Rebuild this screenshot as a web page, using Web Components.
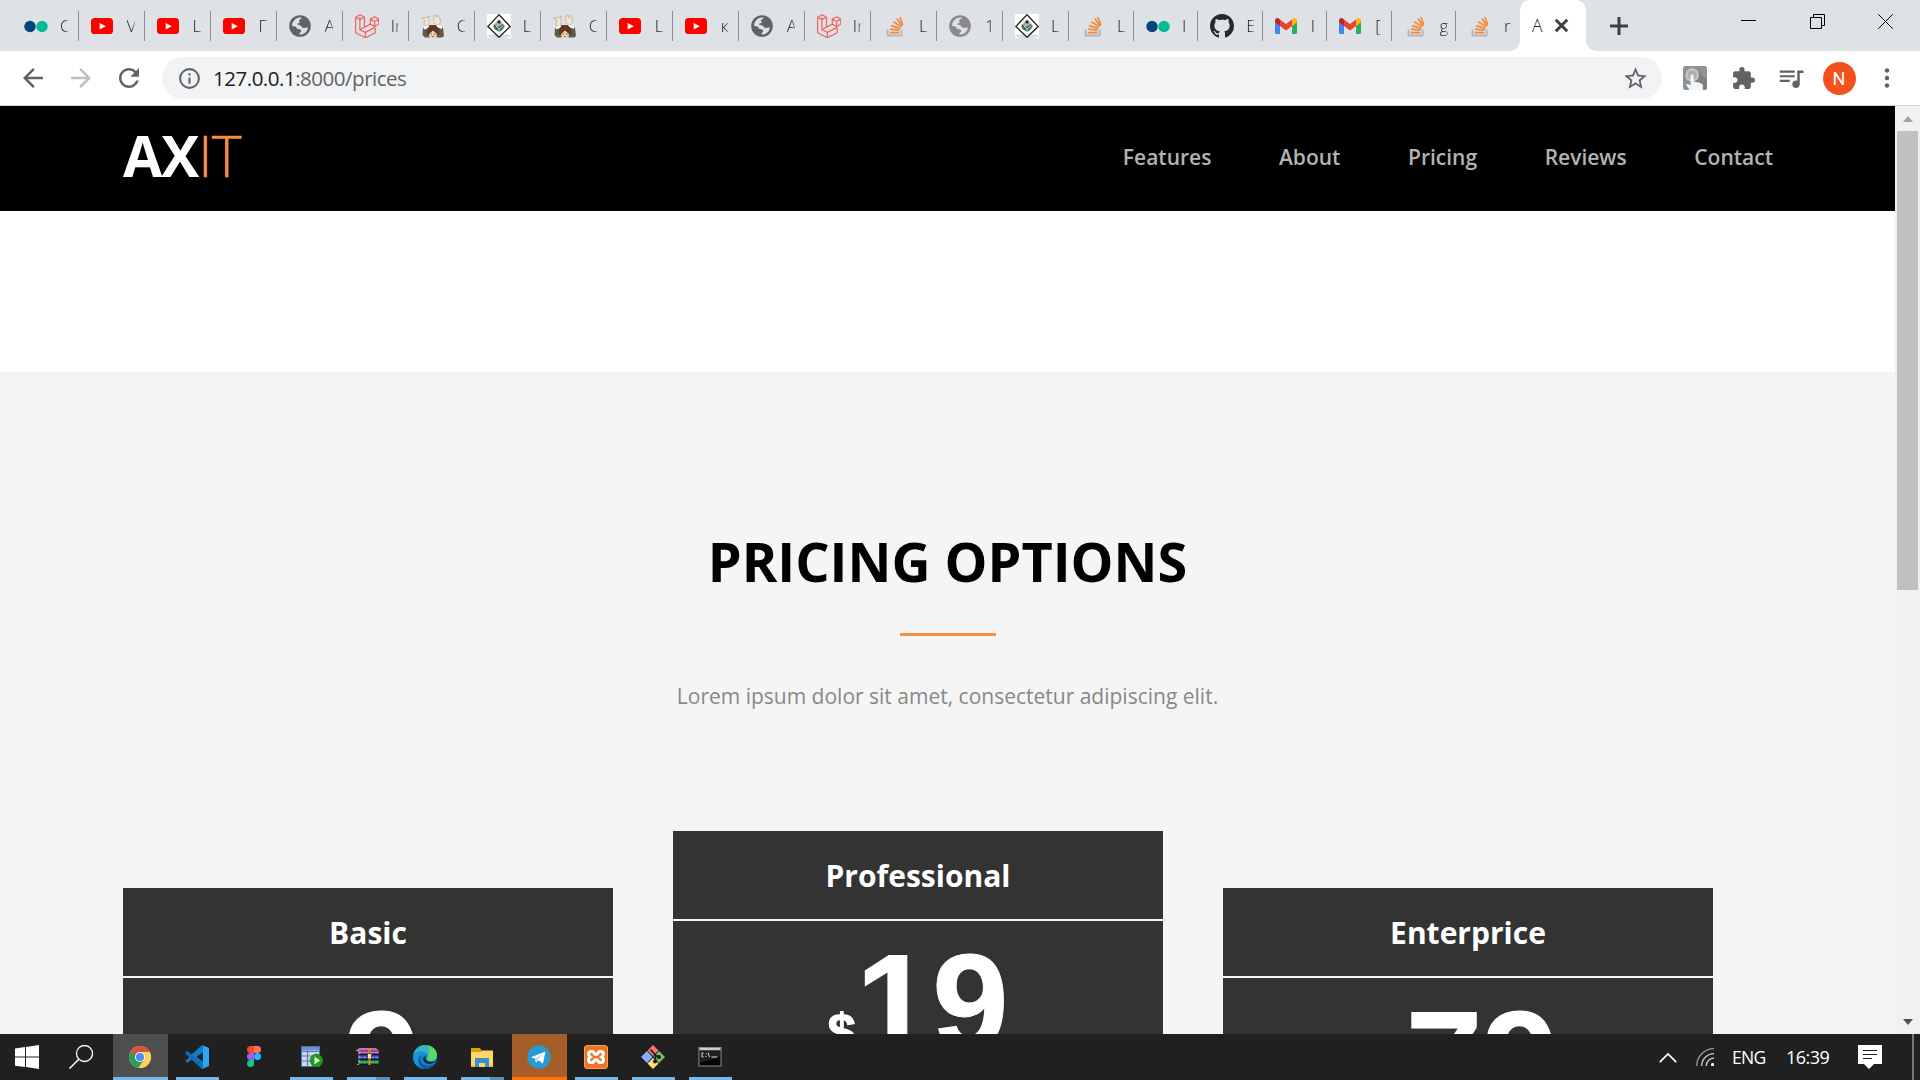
<!DOCTYPE html>
<html lang="en">
<head>
<meta charset="utf-8">
<title>Axit</title>
<style>
html,body{margin:0;padding:0;width:1920px;height:1080px;overflow:hidden;background:#fff}
</style>
</head>
<body>
<desktop-screen></desktop-screen>
<script>
const s=(vb,b,a='')=>`<svg viewBox="${vb}" ${a} xmlns="http://www.w3.org/2000/svg">${b}</svg>`;
const ICONS={
flickr:s('0 0 24 24','<circle cx="6" cy="12.5" r="5.7" fill="#04457f"/><circle cx="18" cy="12.5" r="5.7" fill="#05bb94"/>'),
yt:s('0 0 24 24','<rect x="0" y="4" width="22" height="16" rx="3.6" fill="#f00"/><path d="M8.7 9l6 3.3-6 3.3z" fill="#fff"/>'),
globe:s('0 0 24 24','<circle cx="11" cy="12" r="10.8" fill="var(--c,#5f6368)"/><path d="M3 11.800C3.200 7.500 6.500 3.800 11 3.500c1.200 0 2 .4 1.500 1-.9.900-2.600.9-2.600 2 0 1 1.100 1.100.8 2-.4 1-2.200.5-2.600 1.600-.2 1 2.300.7 3.400 1.300 1.200.7.9 2 2.400 2.400 1.900.4 3.900-.6 5-.2-.2 3.200-2.600 5.800-5.500 6.700-1.300.4-3.200.4-3-.6.4-1.500 2-1.400 1.800-2.900-.2-1.600-2.300-.9-3.600-1.700-1.500-.900-.8-2.500-2.400-2.700-1-.1-2.200-.3-3.200-.6z" fill="#dee1e6"/>'),
laravel:s('0 0 24 24','<path d="M.6 3.200v15.600l9.800 5 9.800-5v-5M.6 3.200l4.600-2.400 4.300 2.400v9.900l-4.600 2.600V3.200M.6 3.200l4.300 2.300 4.600-2.300M10.400 23.800v-5.400l9.600-5M4.900 15.700l5.500 2.700M9.500 13.100l5.800-3V5l4.300-2.200L23.800 5v5.200l-4.100 2.300-4.400-2.400M15.300 5l4.400 2.500L23.800 5M19.700 7.500v5" fill="none" stroke="#f2625c" stroke-width="1.200" stroke-linejoin="round"/>'),
man:s('0 0 24 24','<path d="M2 14l5-3h11l4 3 1 8-2 1.500H4L1.500 21z" fill="#5f5a4c"/><path d="M.5 4l4.500-.5 4-1.500-2 3 1.500 2.500-1.500 4-4 .5.500-6zM13 1.500l1.500-.7 1.200 3 .8-3 2 2.700 1.200 4.500-2.700 3.500-3.500-2-1.200-5z" fill="#f3e6d2" stroke="#b39d7a" stroke-width=".6"/><path d="M2.500 12.500l5-1.500 1 2.500-5.500 2zM15 10.500l6 1.500v3l-5-2z" fill="#fff"/><path d="M6 20.500c-.5-6 2-9.500 6-9.500s6.800 3.500 6.300 9.500l-2.300.5-4-4-4 4z" fill="#66351f"/><path d="M8 20l4-3.500 4 3.500-.5 4h-7z" fill="#ecd2b2"/><path d="M9.300 20.300l1.700-.5M13 19.800l1.700.5M11 22.500h2" stroke="#754b35" stroke-width=".8"/>'),
diamond:s('0 0 24 24','<rect width="24" height="24" fill="#fff"/><ellipse cx="12" cy="22" rx="12" ry="2" fill="#ddd"/><path d="M12 .8L23.200 12.500 12 23.300.8 12.500z" fill="#fff" stroke="#222" stroke-width="1.300"/><path d="M12 5l6.500 7.500-6.500 6-6.500-6z" fill="#a9b5ad"/><circle cx="12" cy="8" r="1.600" fill="#222"/><path d="M6.500 10l4.500 3 5-3 1 3.500-4.500 4.500-5-3z" fill="#356b4b"/><path d="M9 12l3 3 4-3M12 15v3" stroke="#cfe0d6" fill="none"/>'),
so:s('0 0 24 24','<path d="M4.600 15.500v6h14v-6" fill="none" stroke="#b4b6b8" stroke-width="1.900"/><path d="M7 18.600h9.500M7.300 15.200l9.400 1M8.300 11.600l9 2.800M10.600 7.700l7.900 5.200M14 4.500l5.400 7.400M17 3l3 8" transform="translate(-.2 0)" stroke="#f48833" stroke-width="1.700"/>'),
github:s('0 0 16 16','<path fill="#24292e" d="M8 0C3.580 0 0 3.580 0 8c0 3.540 2.290 6.530 5.470 7.590.4.070.55-.17.55-.38 0-.19-.010-.82-.010-1.490-2.010.37-2.530-.49-2.690-.94-.090-.23-.48-.94-.82-1.130-.28-.15-.68-.52-.010-.53.63-.010 1.080.58 1.230.82.72 1.210 1.870.87 2.330.66.070-.52.28-.87.51-1.070-1.780-.2-3.640-.89-3.640-3.950 0-.87.31-1.590.82-2.150-.080-.2-.36-1.020.080-2.120 0 0 .67-.21 2.200.82.64-.18 1.320-.27 2-.27s1.360.09 2 .27c1.530-1.040 2.200-.82 2.200-.82.44 1.100.16 1.920.08 2.120.51.56.82 1.270.82 2.150 0 3.070-1.870 3.750-3.650 3.950.29.25.54.73.54 1.480 0 1.070-.010 1.930-.010 2.200 0 .21.15.46.55.38A8.010 8.010 0 0 0 16 8c0-4.420-3.580-8-8-8z"/>'),
gmail:s('0 0 24 24','<path d="M0 6v12.500Q0 20 1.500 20H5V9z" fill="#4285f4"/><path d="M17 9v11h3.500q1.500 0 1.500-1.500V6z" fill="#34a853"/><path d="M17 5.500V12l5-3.700V6.500c0-2.400-2.400-3-3.600-2.100z" fill="#fbbc04"/><path d="M5 12V5.500l6 4.600 6-4.600V12l-6 4.600z" fill="#ea4335"/><path d="M0 6.500v1.800L5 12V5.500L3.600 4.400C2 3.400 0 4.300 0 6.500z" fill="#c5221f"/>'),
back:s('0 0 24 24','<path fill="#5f6368" d="M20 11H7.830l5.590-5.590L12 4l-8 8 8 8 1.410-1.410L7.830 13H20z"/>'),
fwd:s('0 0 24 24','<path fill="#bdbfc1" d="M4 11h12.170l-5.590-5.590L12 4l8 8-8 8-1.410-1.410L16.170 13H4z"/>'),
reload:s('0 0 24 24','<path fill="#5f6368" d="M17.650 6.350C16.200 4.900 14.210 4 12 4c-4.420 0-7.990 3.580-7.990 8s3.570 8 7.990 8c3.730 0 6.840-2.550 7.730-6h-2.080c-.82 2.330-3.040 4-5.650 4-3.310 0-6-2.690-6-6s2.690-6 6-6c1.660 0 3.140.69 4.220 1.780L13 11h7V4z"/>'),
info:s('0 0 24 24','<circle cx="12" cy="12" r="9" fill="none" stroke="#5f6368" stroke-width="2"/><path d="M11 7h2v2h-2zM11 11h2v6h-2z" fill="#5f6368"/>'),
star:s('0 0 24 24','<path fill="#5f6368" d="M22 9.240l-7.190-.62L12 2 9.190 8.630 2 9.240l5.460 4.730L5.820 21 12 17.270 18.180 21l-1.630-7.030zM12 15.400l-3.760 2.270 1-4.280-3.320-2.880 4.380-.38L12 6.100l1.710 4.040 4.380.38-3.320 2.880 1 4.280z"/>'),
touch:s('0 0 24 24','<rect width="24" height="24" rx="2.500" fill="#919191"/><path d="M14 4l10 10v8l-2 2H12z" fill="#7f7f7f"/><circle cx="9.200" cy="9" r="6.800" fill="#c6c6c6"/><circle cx="9.200" cy="9" r="4.600" fill="#adadad"/><path d="M7.600 9.500q1.400-3 3 0v6l6 1.300 3.200 1.600V24H6.500L3 18.400q1.600-1.200 4.600 1z" fill="#eef6fe"/>'),
puzzle:s('0 0 24 24','<path fill="#5f6368" d="M20.500 11H19V7c0-1.100-.9-2-2-2h-4V3.500a2.500 2.500 0 0 0-5 0V5H4c-1.100 0-1.990.9-1.990 2v3.800H3.500c1.490 0 2.700 1.210 2.700 2.700s-1.210 2.700-2.700 2.700H2V20c0 1.100.9 2 2 2h3.800v-1.500c0-1.490 1.210-2.700 2.700-2.700s2.700 1.210 2.700 2.700V22H17c1.100 0 2-.9 2-2v-4h1.500a2.500 2.500 0 0 0 0-5z"/>'),
music:s('0 0 24 24','<path fill="#5f6368" d="M15 6H3v1.700h12zM15 9.700H3v1.700h12zM3 15.100h8v-1.700H3zM17 6v8.180c-.31-.11-.65-.18-1-.18-1.660 0-3 1.340-3 3s1.340 3 3 3 3-1.340 3-3V8h3V6z"/>'),
dots:s('0 0 24 24','<g fill="#5f6368"><circle cx="12" cy="4.500" r="2.200"/><circle cx="12" cy="12" r="2.200"/><circle cx="12" cy="19.500" r="2.200"/></g>'),
plus:s('0 0 24 24','<path d="M12 3v18M3 12h18" stroke="#3c4043" stroke-width="3"/>'),
x:s('0 0 24 24','<path d="M6.500 6.500l11 11M17.500 6.500l-11 11" stroke="#3c4043" stroke-width="2.900"/>'),
min:s('0 0 15 15','<path d="M0 6.500h15" stroke="#000"/>'),
restore:s('0 0 15 15','<path d="M.5 3.500h11v11H.5zM3.500 3.500v-3h11v11h-3" fill="none" stroke="#000"/>'),
close:s('0 0 15 15','<path d="M.3.3l14.400 14.400M14.700.3L.3 14.700" stroke="#000"/>'),
win:s('0 0 24 24','<path fill="#fff" d="M0 3.500l10-1.400v9.400H0zM11 2l13-2v11.500H11zM0 12.500h10v9.600L0 20.700zM11 12.500h13V24l-13-1.900z"/>'),
search:s('0 0 24 24','<circle cx="15.500" cy="8.500" r="8" fill="none" stroke="#fff" stroke-width="1.300"/><path d="M9.800 14.200L.4 23.600" stroke="#fff" stroke-width="1.500"/>'),
chrome:s('0 0 24 24','<circle cx="12" cy="12" r="11" fill="#fdd25a"/><path d="M2.470 6.500A11 11 0 0 0 10.500 22.900L16.300 14.500 12 12z" fill="#279f5c"/><path d="M12 7h9.800a11 11 0 0 1-11.300 15.900l5.800-8.400z" fill="#fdd25a"/><path d="M2.470 6.500A11 11 0 0 1 21.800 7H12a5 5 0 0 0-4.700 3.600z" fill="#d9513f"/><circle cx="12" cy="12" r="5.100" fill="#f2f2f2"/><circle cx="12" cy="12" r="4" fill="#4b8bf4"/>'),
vscode:s('0 0 24 24','<path d="M17 0L6.700 9.600 2.500 6.300.3 7.600 4.600 12 .3 16.300l2.200 1.400 4.200-3.300L17 24l1.500-6.500L11.600 12l6.900-5.500z" fill="#0b7fc9"/><path d="M0 8.200L2 6.500 17.600 18v5.800z" fill="#0a6fb6"/><path d="M17 0l7 3v18l-7 3 .9-1.700V2z" fill="#2da6f2"/>'),
figma:s('0 0 24 24','<path d="M12 1H8.500a3.500 3.500 0 0 0 0 7H12z" fill="#f24e1e"/><path d="M12 1h3.500a3.500 3.500 0 0 1 0 7H12z" fill="#ff7262"/><path d="M12 8H8.500a3.500 3.500 0 0 0 0 7H12z" fill="#a259ff"/><circle cx="15.500" cy="11.500" r="3.500" fill="#1abcfe"/><path d="M12 15H8.500a3.500 3.500 0 1 0 3.500 3.500z" fill="#0acf83"/>'),
db:s('0 0 24 24','<rect x="2.500" y="1.500" width="18" height="20" fill="#c9daf0" stroke="#4a70a8"/><path d="M3 6.500h17M3 11h17M3 16h17M8.500 2v19" stroke="#5379b2" stroke-width="1.200"/><path d="M3 2h17v3.500H3z" fill="#6d92c9"/><circle cx="17.500" cy="15.500" r="6.400" fill="#1aa011" stroke="#0d7308" stroke-width=".6"/><path d="M15.500 11.800l5.500 3.700-5.500 3.700z" fill="#fff"/>'),
rar:s('0 0 24 24','<path d="M3 3h17l3 3H0z" fill="#b27aa5"/><path d="M2 5h21v4.500H2z" fill="#a43e8f"/><path d="M2 10h21v4.500H2z" fill="#2749d6"/><path d="M2 15h21v4.500H2z" fill="#16952c"/><path d="M2 9.500h21M2 14.500h21M2 19.500h21" stroke="#14142b" stroke-width="1.600"/><path d="M0 5.500h3v14H0M3 7.500h19M3 12.300h19M3 17.200h19" stroke="#e8dfe2" stroke-width=".6" fill="none" stroke-dasharray="3 1"/><path d="M12.300 3h2.400v17h-2.400z" fill="#c98b30"/><rect x="11.500" y="8.500" width="4" height="5.500" rx="1" fill="#f5e7ae" stroke="#40300e" stroke-width=".8"/>'),
edge:s('0 0 24 24','<circle cx="12" cy="12" r="12" fill="#1384d3"/><path d="M.3 10C1.500 4 6.300 0 12 0c6.800 0 12 4.600 12 10 0 3.800-2.800 6-6 6-2.600 0-4.200-1-4.200-1.800 0-.7 1-1 1-2.700C14.800 9 12.600 7 9.700 7 5 7 1 8.600.3 10z" fill="#2fb5c4"/><path d="M14 .3C20 1.300 24 5.500 24 10c0 3.800-2.800 6-6 6-2.600 0-4.200-1-4.200-1.800 0-.7 1-1 1-2.700C17 7 17 3 14 .3z" fill="#5bd668"/><path d="M9 10c-4 4-2 11 4 13-7 1-13-4-13-11 0-3 3-5.500 7-5.500 4.500 0 7.500 2 7.800 4.800C14 9.500 11 8.500 9 10z" fill="#1e8fd6"/><path d="M8.700 10.300C5.500 14 8 20 13.500 20.600c3.500.3 6-1 8.400-2.100C20 22 16 24 12 24c-5-1.500-7.500-6-6.500-10 .5-2 1.700-3.200 3.200-3.700z" fill="#0c59a4"/><path d="M12.500 11c-1 2.500 1 5.500 4.700 6 2 .2 4-.3 5.500-1.200-.6 1.800-4 3.700-7.500 3-5-.9-7-6-2.700-7.800z" fill="#202020"/>'),
folder:s('0 0 24 24','<path d="M1 3h9l1.500 2.500V8H1z" fill="#dd9f09"/><path d="M1 7h10l1-1.500h11V22H1z" fill="#ffd566"/><path d="M5 22v-9h14v9h-4v-4H9v4z" fill="#3a90d2"/><path d="M1 20h4v2H1zM19 20h4v2h-4z" fill="#f5bf42"/>'),
tg:s('0 0 24 24','<circle cx="12" cy="12" r="11.700" fill="#2799d5"/><path d="M4 12.300L18.500 6.500 16 18.500l-4.700-3.300-2.300 2.500-.8-4z" fill="#fff"/><path d="M8.200 13.700L16 8.500l-5.500 6.200L9 17.700z" fill="#b9d6ea"/>'),
xampp:s('0 0 24 24','<rect x=".5" y=".5" width="23" height="23" rx="2.500" fill="#ec7424" stroke="#ffa057"/><path d="M7 6.500h1.500c1.500 0 1.500 3 3.500 3s2-3 3.500-3H17c3 0 3 4 .8 5.500 2.200 1.500 2.200 5.500-.8 5.500h-1.500c-1.500 0-1.500-3-3.500-3s-2 3-3.500 3H7c-3 0-3-4-.8-5.500C4 10.500 4 6.500 7 6.500z" fill="none" stroke="#fff" stroke-width="3.200"/>'),
git:s('0 0 24 24','<path d="M12 0l5.500 5.500-5.500 5.500-5.500-5.500z" fill="#f57373"/><path d="M6 6l5.500 6L6 18 0 12z" fill="#83b0ff"/><path d="M18 6l6 6-6 6-5.500-6z" fill="#7ac35e"/><path d="M12 13l5.500 5.500L12 24l-5.500-5.500z" fill="#ffe07a"/><path d="M9.500 4.500l5 5.500v8M14 10l4 2" stroke="#1b1b1b" stroke-width="1.600" fill="none"/><circle cx="14" cy="16.500" r="2" fill="#1b1b1b"/><circle cx="18" cy="12" r="2" fill="#1b1b1b"/>'),
cmd:s('0 0 24 24','<rect x="1" y="2.500" width="22" height="18.500" fill="#050505" stroke="#8b8f93"/><path d="M1.500 3h21v2.300h-21z" fill="#c5cfda"/><path d="M5.500 8H4v4h1.500M8 8.500v1M8 11v1M10 7.500l1.500 4.500M13.500 12h6" stroke="#e0e0e0" fill="none"/><path d="M2 5.500h20v6L2 18z" fill="#fff" opacity=".1"/>'),
up:s('0 0 18 11','<path d="M.8 10.200L9 2l8.200 8.200" fill="none" stroke="#fff" stroke-width="1.700"/>'),
wifi:s('0 0 18 18','<path d="M.7 18A17.300 17.300 0 0 1 18 .7" fill="none" stroke="#9b9b9b" stroke-width="1.300"/><path d="M5.700 18A12.300 12.300 0 0 1 18 5.700M10.200 18A7.800 7.800 0 0 1 18 10.200" fill="none" stroke="#d0d0d0" stroke-width="1.300"/><circle cx="16.500" cy="16.500" r="1.600" fill="#fff"/>'),
note:s('0 0 24 24','<path d="M0 0h24v19h-8l-5 5-5-5H0z" fill="#fff"/><path d="M5 5.500h14M5 9.500h14M5 13.500h9" stroke="#1f1f1f" stroke-width="1.200"/>')
};

function define(name,css,html){
  customElements.define(name,class extends HTMLElement{
    connectedCallback(){
      if(this.shadowRoot)return;
      const t=document.createElement('template');
      t.innerHTML=`<style>${css}</style>${typeof html==='function'?html(this):html}`;
      this.attachShadow({mode:'open'}).append(t.content.cloneNode(true));
    }
  });
}
const ic=(n,size,extra='')=>`<ui-icon name="${n}" style="--s:${size}px;${extra}"></ui-icon>`;

define('ui-icon',`:host{display:block;flex:none;width:var(--s,24px);height:var(--s,24px)}svg{display:block;width:100%;height:100%}`,e=>ICONS[e.getAttribute('name')]);

define('browser-tab',`
:host{display:flex;flex:none;box-sizing:border-box;height:30px;align-items:center;padding-left:12px;border-right:1.5px solid #8b8e93;font:18px "Open Sans",sans-serif;color:#202124}
:host([last]){border-color:transparent}
span{margin-left:12px;width:8px;overflow:hidden;white-space:nowrap;font-size:17px;font-weight:300;line-height:24px;-webkit-mask:linear-gradient(90deg,#000 55%,#0006);margin-top:-1px}
`,e=>`${ic(e.getAttribute('icon'),24,e.hasAttribute('soft')?'--c:#8a8a8a':'')}<span><slot></slot></span>`);

define('active-tab',`
:host{display:flex;flex:none;position:relative;box-sizing:border-box;width:66px;height:51px;align-items:center;background:#fff;border-radius:10px 10px 0 0;padding:0 0 1px 12px;font:300 17.500px "Open Sans",sans-serif;color:#202124}
:host::before,:host::after{content:"";position:absolute;bottom:0;width:10px;height:10px}
:host::before{left:-10px;background:radial-gradient(circle at 0 0,transparent 9.500px,#fff 10px)}
:host::after{right:-10px;background:radial-gradient(circle at 100% 0,transparent 9.500px,#fff 10px)}
span{width:11px;margin-right:6px}
`,`<span><slot></slot></span>${ic('x',25)}`);

const TABS=[['flickr','C',66.5],['yt','V'],['yt','L'],['yt','Г'],['globe','A'],['laravel','In'],['man','C'],['diamond','L'],['man','C'],['yt','L'],['yt','к'],['globe','A'],['laravel','In'],['so','L'],['globe','1'],['diamond','L'],['so','L',65],['flickr','I',64.4],['github','E',64.4],['gmail','I',64.4],['gmail','[',64.4],['so','g',64.4],['so','r',64]];
define('tab-strip',`
:host{display:flex;height:51px;background:#dee1e6;padding-left:12px;box-sizing:border-box}
.tabs{display:flex;align-items:center;width:1508px;flex:none}
.tabs browser-tab{margin-top:1px}
.plus{display:flex;align-items:center;width:65px;justify-content:center}
.win{display:flex;margin-left:auto;height:43px;align-items:center;width:206px}
.win div{display:flex;justify-content:center;flex:1}
`,`<div class="tabs">${TABS.map((t,i)=>`<browser-tab icon="${t[0]}" ${i==22?'last':''} ${i==14?'soft':''} style="width:${t[2]||66.04}px">${t[1]}</browser-tab>`).join('')}</div>
<active-tab>A</active-tab><div class="plus">${ic('plus',24)}</div>
<div class="win"><div>${ic('min',15)}</div><div>${ic('restore',15)}</div><div>${ic('close',15)}</div></div>`);

define('address-bar',`
:host{display:flex;align-items:center;box-sizing:border-box;width:1500px;height:42px;border-radius:21px;background:#f1f3f4;padding:0 13px 0 15px;font:20.5px "Open Sans",sans-serif;color:#5f6368;white-space:nowrap}
p{margin:0 0 0 11px;flex:1;line-height:42px;letter-spacing:-.48px}b{font-weight:400;color:#202124}
`,`${ic('info',25)}<p><b>127.0.0.1</b>:8000/prices</p>${ic('star',27)}`);

define('browser-toolbar',`
:host{display:flex;align-items:center;height:54px;background:#fff;padding-left:9px;box-sizing:border-box;border-bottom:0}
i{display:flex;width:48px;justify-content:center;font-style:normal}
address-bar{margin:0 9px}
.av{width:33px;height:33px;border-radius:50%;background:#f4511e;color:#fff;font:18px/33px Roboto,sans-serif;text-align:center}
`,`<i>${ic('back',30)}</i><i>${ic('fwd',30)}</i><i>${ic('reload',30)}</i><address-bar></address-bar><i>${ic('touch',24)}</i><i>${ic('puzzle',25)}</i><i>${ic('music',30)}</i><i><span class="av">N</span></i><i>${ic('dots',24)}</i>`);

define('site-header',`
:host{display:flex;justify-content:space-between;align-items:center;height:105px;background:#000;box-sizing:border-box;padding:0 122px 0 123px;font-family:"Open Sans",sans-serif}
.logo{font-size:57px;line-height:60px;font-weight:700;color:#fff;letter-spacing:-1px;display:flex;margin-top:-8px}
.logo span{font-weight:300;color:#f78d3f;-webkit-text-stroke:.5px #f78d3f}
nav{display:flex;gap:67.600px;font-size:21px;font-weight:600;color:#b3b3b3;line-height:30px;margin-top:-3px}
`,`<div class="logo">AX<span>IT</span></div><nav><span>Features</span><span>About</span><span>Pricing</span><span>Reviews</span><span>Contact</span></nav>`);

define('price-card',`
:host{display:block;width:490px;height:420px;background:#333;color:#fff;text-align:center}
h3{margin:0;height:88px;border-bottom:2px solid #f5f5f5;font:700 30px/90px "Open Sans",sans-serif}
.p{font:700 137px/166px "Liberation Sans",Arial,sans-serif;margin-top:-1px;white-space:nowrap;-webkit-text-stroke:1px #fff}
small{font-size:51px}
`,e=>`<h3>${e.getAttribute('plan')}</h3><div class="p"><small>$</small><slot></slot></div>`);

define('pricing-section',`
:host{display:flex;flex-direction:column;align-items:center;height:662px;overflow:hidden;background:#f5f5f5;margin-top:161px;font-family:"Open Sans",sans-serif}
h2{margin:152px 0 0;font-size:54px;line-height:74px;font-weight:700;color:#000}
hr{flex:none;border:0;margin:35px 0 0;width:96px;height:3px;background:#f78d3f}
p{margin:45px 0 0;font-size:21px;line-height:30px;color:#888}
.cards{display:flex;gap:60px;align-self:flex-start;margin:120px 0 0 123px;align-items:flex-start}
.side{margin-top:57px}
`,`<h2>PRICING OPTIONS</h2><hr><p>Lorem ipsum dolor sit amet, consectetur adipiscing elit.</p>
<div class="cards"><price-card class="side" plan="Basic">9</price-card><price-card plan="Professional">19</price-card><price-card class="side" plan="Enterprice">79</price-card></div>`);

define('scroll-bar',`
:host{display:flex;flex-direction:column;align-items:center;width:25px;background:#f1f1f1;height:928px}
i{border:5.500px solid transparent;width:0;height:0}
.u{border-width:0 5.500px 6px;border-bottom-color:#a3a3a3;margin:10px 0 9px}
.t{width:21px;height:459px;background:#c1c1c1}
.d{border-width:6px 5.500px 0;border-top-color:#505050;margin:auto 0 9px}
`,`<i class="u"></i><div class="t"></div><i class="d"></i>`);

define('task-button',`
:host{display:flex;flex-direction:column;width:57px;height:46px;align-items:center;padding:0 1px;box-sizing:border-box}
.b{width:100%;height:43px;display:flex;align-items:center;justify-content:center;padding:3px 1px 0 0;box-sizing:border-box;background:var(--bg,none)}
.l{width:43px;height:3px;background:var(--line,#76b9ed)}
:host([full]) .l{width:100%}
:host([none]) .l{background:none}
:host([multi]) .l{background:linear-gradient(90deg,#76b9ed 29px,#5b8fb8 29px)}
`,e=>`<div class="b">${ic(e.getAttribute('icon'),24)}</div><div class="l"></div>`);

define('task-bar',`
:host{display:flex;height:46px;background:#202020;color:#fff;font:18px "Open Sans",sans-serif}
.sys{display:flex;width:112px;align-items:center;gap:30px;padding-left:15px;box-sizing:border-box}
.tray{display:flex;margin-left:auto;align-items:center;width:261px}
.tray span{line-height:46px;white-space:nowrap}
.e{width:33px;margin-left:18px;letter-spacing:-.7px;font-size:17.500px}
.c{width:43px;margin-left:21px;font-size:18px;letter-spacing:-.55px}
ui-icon.up{height:11px}
.end{width:2px;height:46px;background:#777;margin-left:30px}
`,`<div class="sys">${ic('win',24)}${ic('search',24)}</div>
<task-button icon="chrome" full style="--bg:#4e4e4e"></task-button><task-button icon="vscode"></task-button><task-button icon="figma" none></task-button><task-button icon="db"></task-button><task-button icon="rar" multi></task-button><task-button icon="edge"></task-button><task-button icon="folder" multi></task-button><task-button icon="tg" full style="--bg:#a65e28;--line:#ff7300"></task-button><task-button icon="xampp"></task-button><task-button icon="git"></task-button><task-button icon="cmd"></task-button>
<div class="tray"><ui-icon class="up" name="up" style="--s:18px"></ui-icon>${ic('wifi',18,'margin-left:19px')}<span class="e">ENG</span><span class="c">16:39</span>${ic('note',24,'margin-left:29px')}<div class="end"></div></div>`);

define('desktop-screen',`
:host{display:flex;flex-direction:column;width:1920px;height:1080px;overflow:hidden;background:#fff}
.line{height:1px;background:#d5d7da}
.view{display:flex;height:928px}
main{width:1895px;height:928px;overflow:hidden}
`,`<tab-strip></tab-strip><browser-toolbar></browser-toolbar><div class="line"></div>
<div class="view"><main><site-header></site-header><pricing-section></pricing-section></main><scroll-bar></scroll-bar></div><task-bar></task-bar>`);
</script>
</body>
</html>
